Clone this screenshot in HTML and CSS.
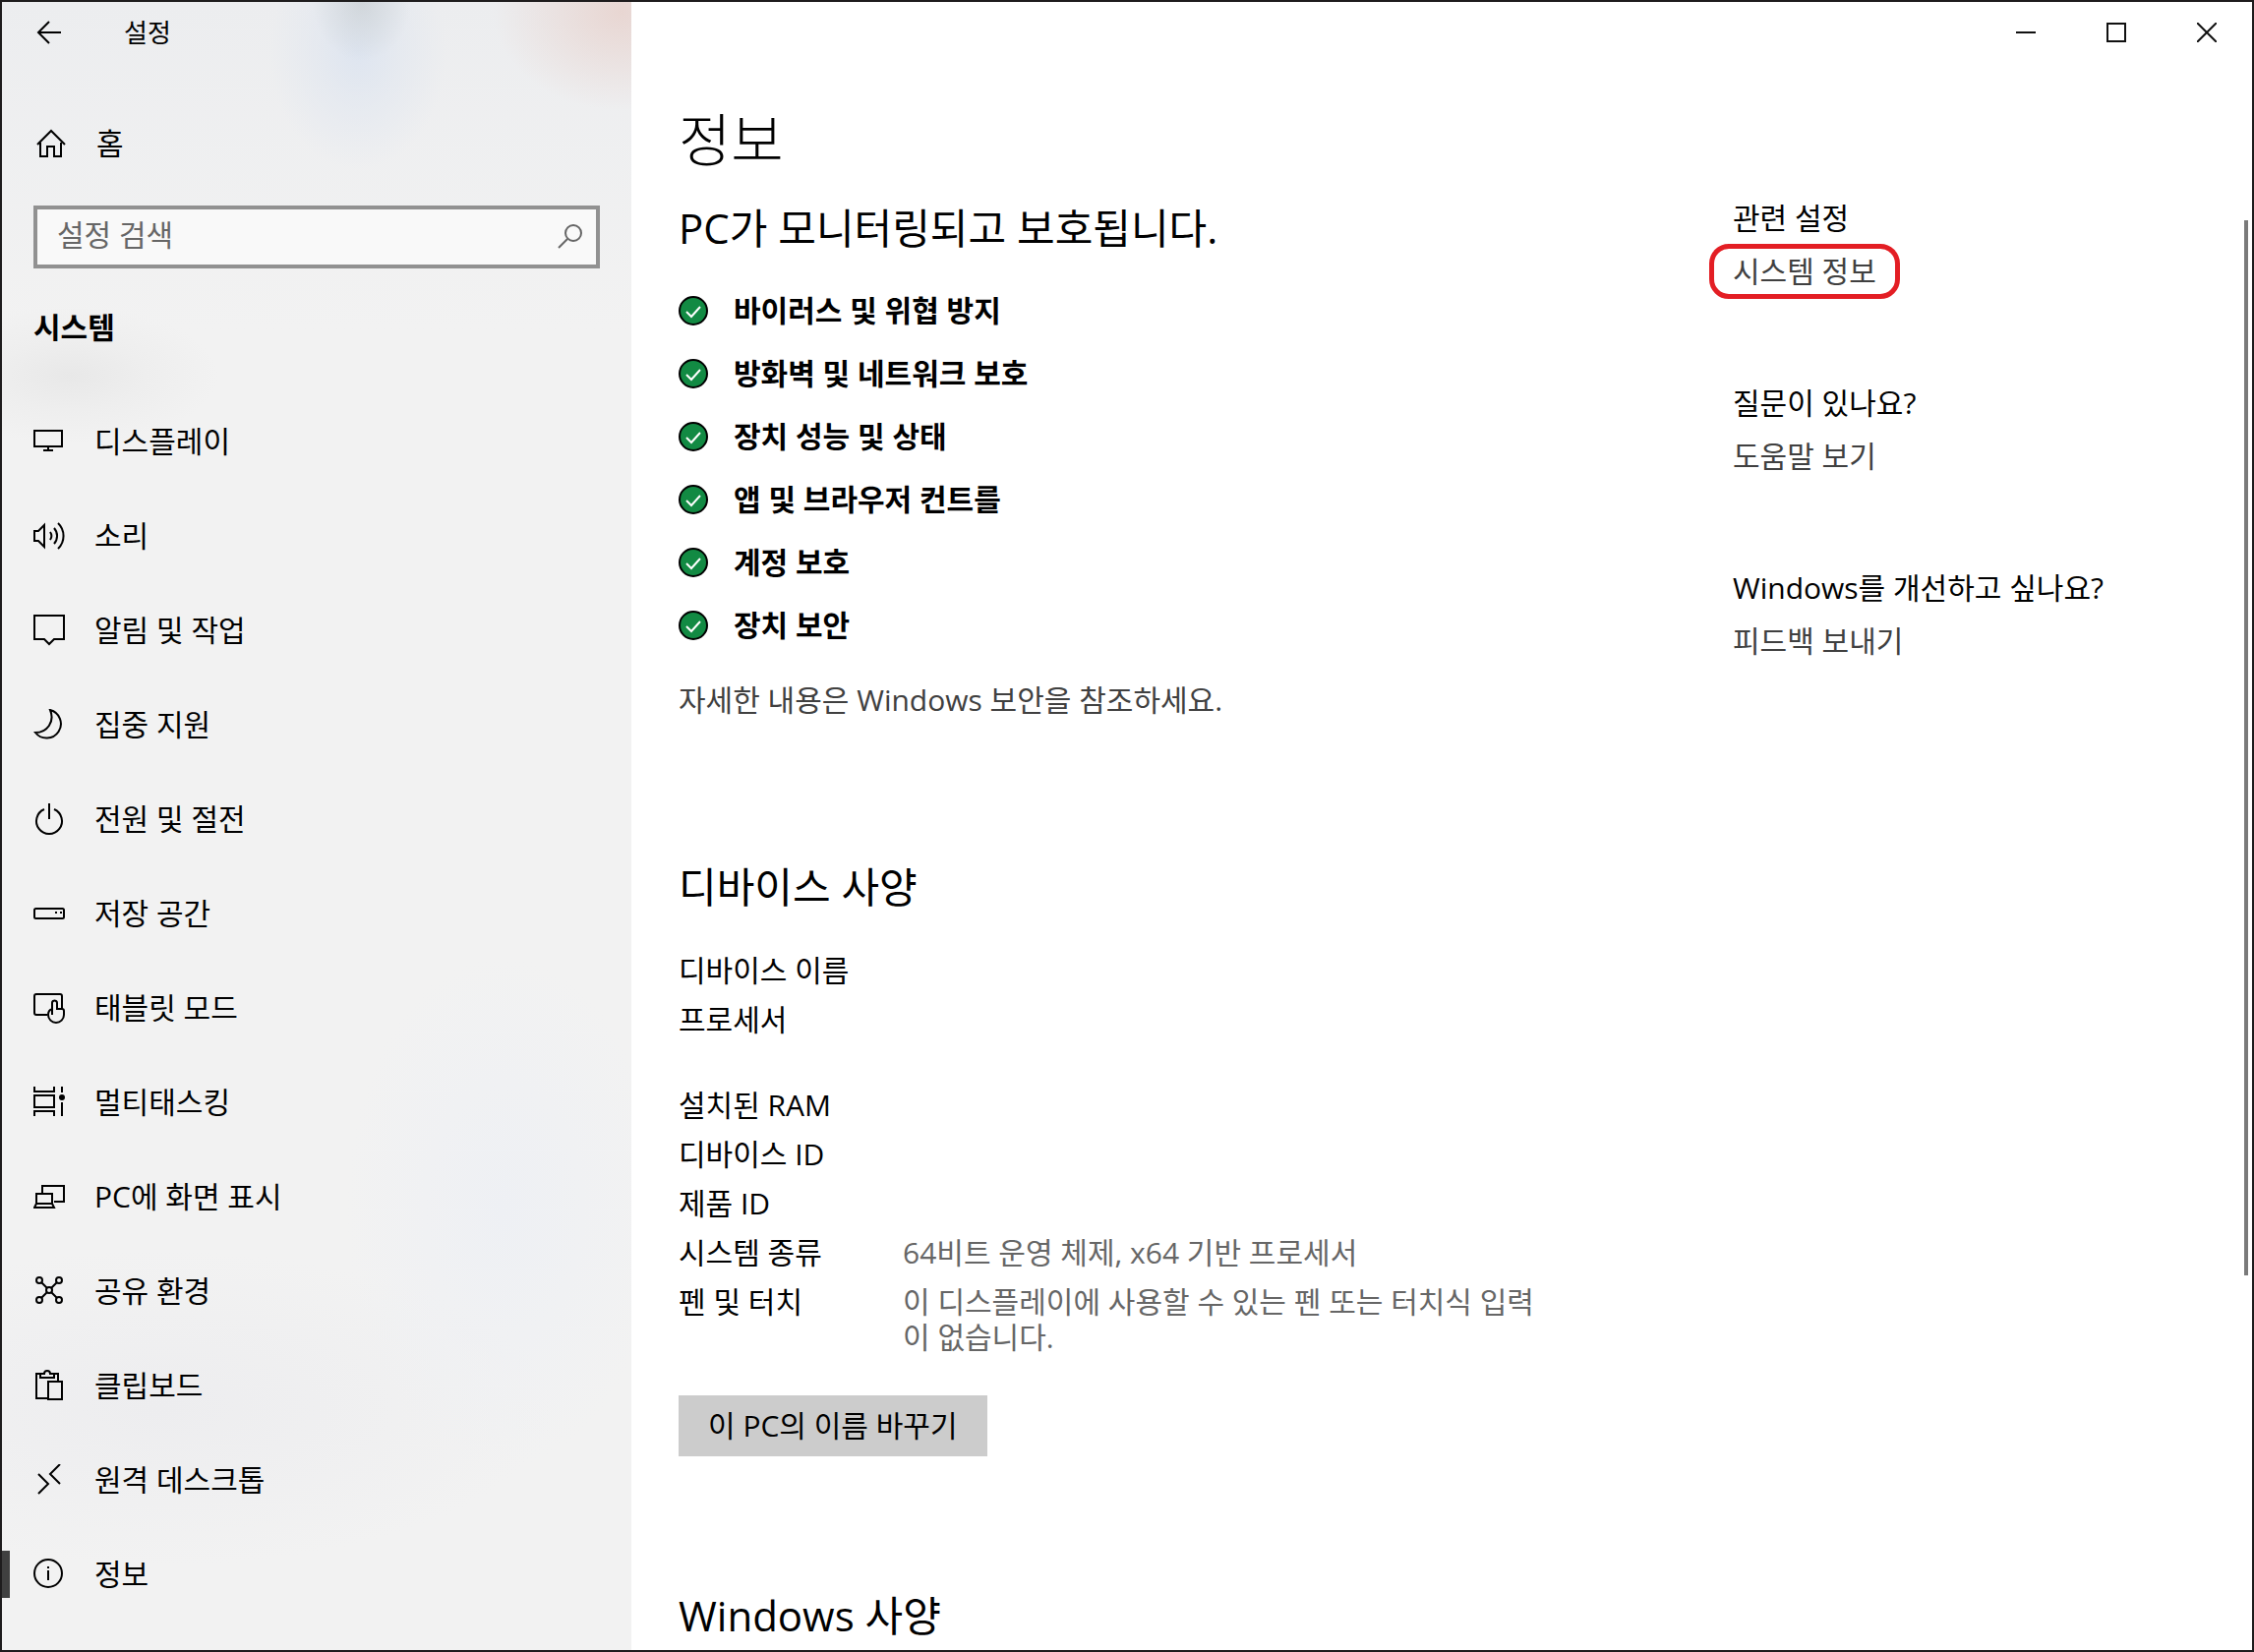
FILE: index.html
```
<!DOCTYPE html>
<html lang="ko">
<head>
	<meta charset="UTF-8">
	<title>설정</title>
	<link rel="stylesheet" href="styles.css">
</head>
<body>
<div class="window">
	<aside class="side">
		<header class="side-top">
			<button type="button" class="back" aria-label="뒤로">
				<svg class="ico" viewBox="0 0 32 32"><path d="M28 16H5M16 5L5 16l11 11"/></svg>
			</button>
			<span class="app-title">설정</span>
		</header>
		<a href="#" class="home">
			<svg class="ico" viewBox="0 0 32 32"><path d="M2 17L16 3l14 14M5 15v14h7V19h7v10h7V15"/></svg>
			<span>홈</span>
		</a>
		<form class="search">
			<input type="text" placeholder="설정 검색" aria-label="설정 검색">
			<button type="submit" aria-label="검색">
				<svg class="ico" viewBox="0 0 32 32"><circle cx="19" cy="12" r="8"/><path d="M13 18L4 27"/></svg>
			</button>
		</form>
		<h2 class="group">시스템</h2>
		<nav>
			<ul class="menu">
				<li><a href="#">
					<svg class="ico" viewBox="0 0 32 32"><path d="M1 5h28v16H1zM15 21v4M10 25h10"/></svg>
					<span>디스플레이</span>
				</a></li>
				<li><a href="#">
					<svg class="ico" viewBox="0 0 32 32"><path d="M1 11h4l6-6v22l-6-6H1zM17 12a7 7 0 0 1 0 8M21 8a12 12 0 0 1 0 16M25 3a18 18 0 0 1 0 26"/></svg>
					<span>소리</span>
				</a></li>
				<li><a href="#">
					<svg class="ico" viewBox="0 0 32 32"><path d="M1 1h30v24H21l-5 5-5-5H1z"/></svg>
					<span>알림 및 작업</span>
				</a></li>
				<li><a href="#">
					<svg class="ico" viewBox="0 0 32 32"><path d="M17 1A14.5 14.5 0 1 1 2 24C14 24 22 13 17 1z"/></svg>
					<span>집중 지원</span>
				</a></li>
				<li><a href="#">
					<svg class="ico" viewBox="0 0 32 32"><path d="M11 6a13 13 0 1 0 10 0M16 0v16"/></svg>
					<span>전원 및 절전</span>
				</a></li>
				<li><a href="#">
					<svg class="ico" viewBox="0 0 32 32"><rect x="1" y="11" width="30" height="10" rx="1.5"/><path d="M22 15h2M27 15h2"/></svg>
					<span>저장 공간</span>
				</a></li>
				<li><a href="#">
					<svg class="ico" viewBox="0 0 32 32"><path d="M14 23H3a2 2 0 0 1-2-2V4a2 2 0 0 1 2-2h24a2 2 0 0 1 2 2v13M19 23V11a2.5 2.5 0 0 1 5 0v6h5a2 2 0 0 1 2 2v4a8 8 0 0 1-16 0c0-3 1-5 4-6"/></svg>
					<span>태블릿 모드</span>
				</a></li>
				<li><a href="#">
					<svg class="ico" viewBox="0 0 32 32"><path d="M1 0v5h20V0M1 9h20v12H1zM1 30v-5h20v5M29 0v6M29 16v14"/><circle cx="29" cy="11" r="3" class="fill"/></svg>
					<span>멀티태스킹</span>
				</a></li>
				<li><a href="#">
					<svg class="ico" viewBox="0 0 32 32"><path d="M9 13V5h22v16H21M3 13h16v10H3zM3 23l-2 4h20l-2-4"/></svg>
					<span>PC에 화면 표시</span>
				</a></li>
				<li><a href="#">
					<svg class="ico" viewBox="0 0 32 32"><circle cx="6" cy="5" r="3"/><circle cx="26" cy="5" r="3"/><circle cx="16" cy="15" r="3"/><circle cx="6" cy="25" r="3"/><circle cx="26" cy="25" r="3"/><path d="M8 7l6 6M24 7l-6 6M14 17l-6 6M18 17l6 6"/></svg>
					<span>공유 환경</span>
				</a></li>
				<li><a href="#">
					<svg class="ico" viewBox="0 0 32 32"><path d="M14 29H3V4h4M21 4h4v8M7 4h4a3 3 0 0 1 6 0h4v4H7zM15 12h14v18H15z"/></svg>
					<span>클립보드</span>
				</a></li>
				<li><a href="#">
					<svg class="ico" viewBox="0 0 32 32"><path d="M5 10l10 10L5 30M27 0L17 10l10 10"/></svg>
					<span>원격 데스크톱</span>
				</a></li>
				<li><a href="#" class="on">
					<svg class="ico" viewBox="0 0 32 32"><circle cx="15" cy="15" r="14"/><path d="M15 12v10M15 8v2"/></svg>
					<span>정보</span>
				</a></li>
			</ul>
		</nav>
	</aside>

	<div class="page">
		<header class="controls">
			<button type="button" aria-label="최소화"><svg class="ctl" viewBox="0 0 20 20"><path d="M0 10h20"/></svg></button>
			<button type="button" aria-label="최대화"><svg class="ctl" viewBox="0 0 20 20"><path d="M1 1h18v18H1z"/></svg></button>
			<button type="button" aria-label="닫기"><svg class="ctl" viewBox="0 0 20 20"><path d="M0 0l20 20M20 0L0 20"/></svg></button>
		</header>
		<div class="columns">
			<main class="content">
				<h1>정보</h1>
				<h2>PC가 모니터링되고 보호됩니다.</h2>
				<ul class="checks">
					<li><svg class="ok" viewBox="0 0 30 30"><circle cx="15" cy="15" r="14"/><path d="M8 16l5 5 9-10"/></svg>바이러스 및 위협 방지</li>
					<li><svg class="ok" viewBox="0 0 30 30"><circle cx="15" cy="15" r="14"/><path d="M8 16l5 5 9-10"/></svg>방화벽 및 네트워크 보호</li>
					<li><svg class="ok" viewBox="0 0 30 30"><circle cx="15" cy="15" r="14"/><path d="M8 16l5 5 9-10"/></svg>장치 성능 및 상태</li>
					<li><svg class="ok" viewBox="0 0 30 30"><circle cx="15" cy="15" r="14"/><path d="M8 16l5 5 9-10"/></svg>앱 및 브라우저 컨트를</li>
					<li><svg class="ok" viewBox="0 0 30 30"><circle cx="15" cy="15" r="14"/><path d="M8 16l5 5 9-10"/></svg>계정 보호</li>
					<li><svg class="ok" viewBox="0 0 30 30"><circle cx="15" cy="15" r="14"/><path d="M8 16l5 5 9-10"/></svg>장치 보안</li>
				</ul>
				<a href="#" class="link more">자세한 내용은 Windows 보안을 참조하세요.</a>

				<h2>디바이스 사양</h2>
				<table class="specs">
					<tr><th scope="row">디바이스 이름</th><td></td></tr>
					<tr class="tall"><th scope="row">프로세서</th><td></td></tr>
					<tr><th scope="row">설치된 RAM</th><td></td></tr>
					<tr><th scope="row">디바이스 ID</th><td></td></tr>
					<tr><th scope="row">제품 ID</th><td></td></tr>
					<tr><th scope="row">시스템 종류</th><td>64비트 운영 체제, x64 기반 프로세서</td></tr>
					<tr><th scope="row">펜 및 터치</th><td>이 디스플레이에 사용할 수 있는 펜 또는 터치식 입력이 없습니다.</td></tr>
				</table>
				<button type="button" class="rename">이 PC의 이름 바꾸기</button>

				<h2>Windows 사양</h2>
			</main>
			<aside class="related">
				<section>
					<h3>관련 설정</h3>
					<a href="#" class="link marked">시스템 정보</a>
				</section>
				<section>
					<h3>질문이 있나요?</h3>
					<a href="#" class="link">도움말 보기</a>
				</section>
				<section>
					<h3>Windows를 개선하고 싶나요?</h3>
					<a href="#" class="link">피드백 보내기</a>
				</section>
			</aside>
		</div>
		<div class="scrollbar"></div>
	</div>
</div>
</body>
</html>
```
FILE: styles.css
```
*{
	box-sizing:border-box;
	margin:0;
	padding:0;
	list-style:none;
}
body{
	font-family:"Open Sans","Noto Sans CJK KR",sans-serif;
	font-size:30px;
	line-height:36px;
	color:#000;
	background:#fff;
}
a{
	color:inherit;
	text-decoration:none;
}
button,input{
	font:inherit;
	color:inherit;
	border:0;
	background:none;
}
.window{
	display:flex;
	min-height:100vh;
	border:2px solid #1e1c1d;
}

/* left menu */
.side{
	flex:none;
	width:640px;
	background:
		radial-gradient(ellipse 50px 60px at 366px 0,rgba(200,206,210,.7),rgba(200,206,210,0)),
		radial-gradient(ellipse 90px 120px at 362px 50px,#dee5f0,rgba(222,229,240,.5) 45%,rgba(222,229,240,0)),
		radial-gradient(ellipse 130px 100px at 630px 10px,#e8d6d2,rgba(232,214,210,.5) 50%,rgba(232,214,210,0)),
		radial-gradient(ellipse 150px 70px at 70px 380px,#e8e8e8,rgba(232,232,232,.4) 50%,rgba(232,232,232,0)),
		radial-gradient(ellipse 160px 260px at 510px 1230px,#eef0f4,rgba(238,240,244,0)),
		radial-gradient(ellipse 400px 160px at 160px 1430px,#ededef,rgba(237,237,239,0)),
		linear-gradient(#ecedef,#f2f2f2 20%);
}
.side-top{
	display:flex;
	align-items:center;
	height:62px;
}
.back{
	display:flex;
	width:124px;
	padding-left:32px;
}
.app-title{
	font-size:26px;
}
.ico{
	flex:none;
	width:32px;
	height:32px;
	fill:none;
	stroke:#000;
	stroke-width:2;
}
.ico .fill{
	fill:#000;
	stroke:none;
}
.home{
	display:flex;
	align-items:center;
	gap:30px;
	height:72px;
	margin-top:46px;
	padding-left:34px;
}
.search{
	display:flex;
	align-items:center;
	height:64px;
	margin:27px 32px 0;
	border:4px solid #919191;
	background:#f9f9f9;
}
.search input{
	flex:1;
	min-width:0;
	height:100%;
	padding:0 0 5px 20px;
	outline:none;
}
.search input::placeholder{
	color:#666;
	opacity:1;
}
.search button{
	display:flex;
	padding-right:10px;
}
.search .ico{
	stroke:#666;
}
.group{
	margin:42px 0 0 32px;
	font-size:30px;
	line-height:36px;
}
.menu{
	margin-top:50px;
}
.menu a{
	position:relative;
	display:flex;
	align-items:center;
	gap:30px;
	height:96px;
	padding-left:32px;
}
.menu .on::before{
	content:"";
	position:absolute;
	left:0;
	top:24px;
	width:8px;
	height:48px;
	background:#404040;
}

/* right side */
.page{
	position:relative;
	flex:1;
	min-width:0;
}
.controls{
	display:flex;
	justify-content:flex-end;
	height:62px;
}
.controls button{
	display:flex;
	align-items:center;
	justify-content:center;
	width:92px;
}
.ctl{
	width:20px;
	height:20px;
	fill:none;
	stroke:#111;
	stroke-width:2;
}
.columns{
	display:flex;
	justify-content:space-between;
	padding-left:48px;
}
.content{
	flex:0 1 900px;
	min-width:0;
}
h1{
	margin-top:40px;
	font-size:58px;
	font-weight:300;
	line-height:76px;
}
.content h2{
	margin-top:24px;
	font-size:42px;
	font-weight:400;
	line-height:56px;
}
.checks{
	margin-top:24px;
}
.checks li{
	display:flex;
	align-items:center;
	gap:26px;
	height:64px;
	font-weight:700;
}
.ok{
	width:30px;
	height:30px;
}
.ok circle{
	fill:#128a43;
	stroke:#000;
	stroke-width:2;
}
.ok path{
	fill:none;
	stroke:#fff;
	stroke-width:2;
}
.link{
	color:#404040;
}
.more{
	display:block;
	margin:26px 0 144px;
}
.specs{
	margin-top:32px;
	border-collapse:collapse;
}
.specs th,.specs td{
	padding:7px 0;
	text-align:left;
	font-weight:400;
	vertical-align:top;
}
.specs th{
	width:228px;
}
.specs td{
	width:660px;
	color:#666;
}
.specs .tall th{
	padding-bottom:44px;
}
.rename{
	height:62px;
	margin:34px 0 110px;
	padding:0 30px;
	background:#ccc;
}
.related{
	flex:none;
	width:528px;
	padding-top:140px;
}
.related section{
	margin-bottom:98px;
}
.related h3{
	margin-bottom:18px;
	font-size:30px;
	font-weight:400;
	line-height:36px;
}
.related .link{
	position:relative;
	display:inline-block;
}
.marked::after{
	content:"";
	position:absolute;
	inset:-10px -24px;
	border:5px solid #e31e24;
	border-radius:20px;
}
.scrollbar{
	position:absolute;
	top:222px;
	right:4px;
	width:4px;
	height:64%;
	background:#7a7a7a;
}
```
